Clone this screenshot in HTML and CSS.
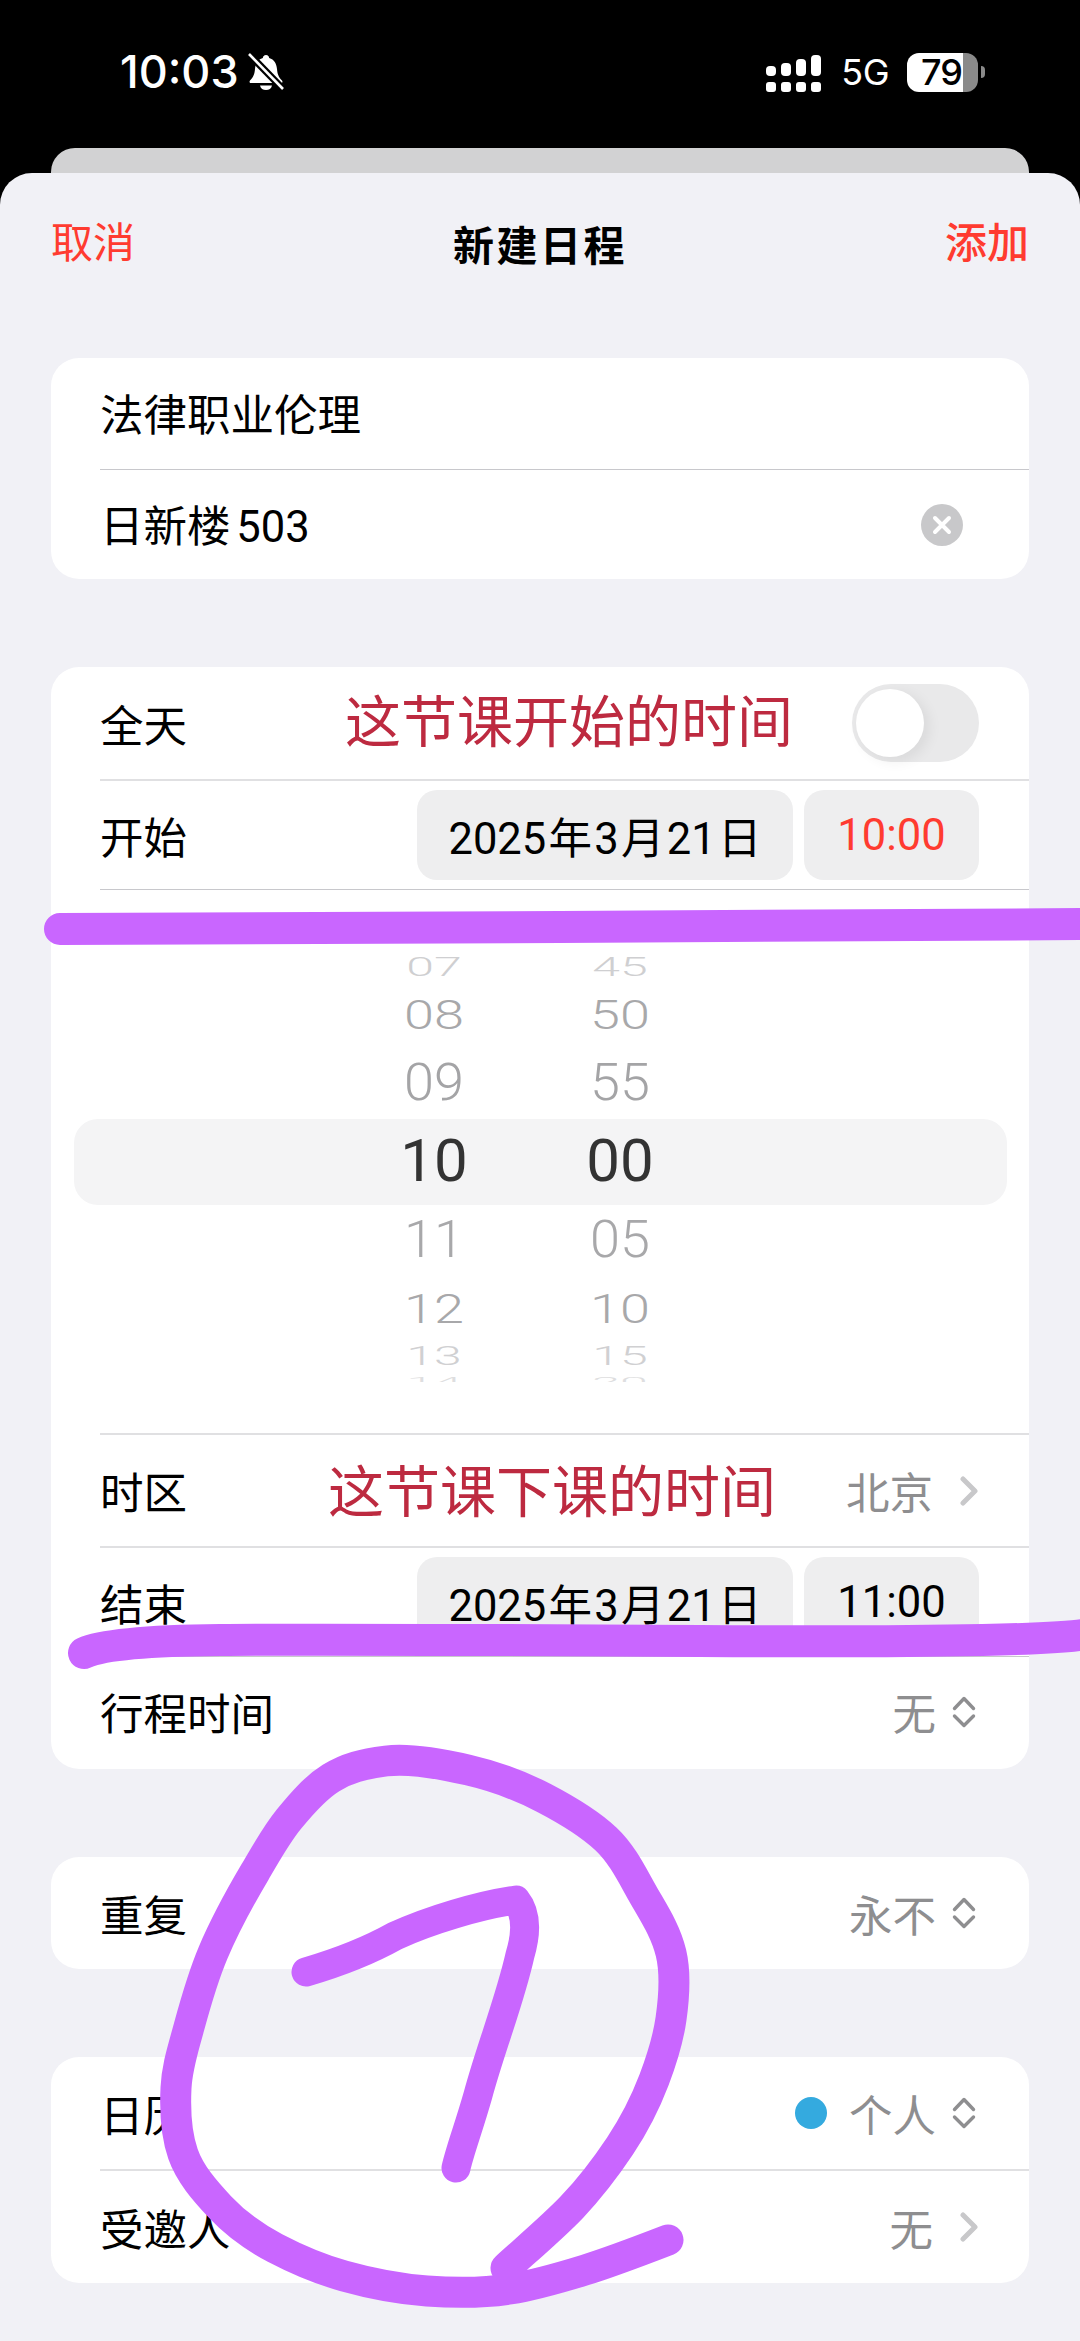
FILE: index.html
```html
<!DOCTYPE html>
<html lang="zh">
<head>
<meta charset="utf-8">
<title>新建日程</title>
<link rel="stylesheet" href="styles.css">
</head>
<body>
<div class="screen">
  <header class="status">
    <div class="status-left">
      <span class="clock">10:03</span>
      <svg class="bell" viewBox="0 0 36 38"><path d="M18 2c2 0 3 1.400 3.200 3 5 1.500 7.300 5.500 7.800 11 .4 5 1.600 8 5 11.500 1 1.300.3 2.500-1 2.500H3c-1.300 0-2-1.200-1-2.500 3.400-3.500 4.600-6.500 5-11.500.5-5.500 2.800-9.500 7.800-11C15 3.400 16 2 18 2z" fill="#fff"/><path d="M12 32.500h12c-.5 3-3 4.500-6 4.500s-5.500-1.500-6-4.500z" fill="#fff"/><path d="M1 1l34 35" stroke="#000" stroke-width="7"/><path d="M1 1l34 35" stroke="#fff" stroke-width="2.600"/></svg>
    </div>
    <div class="status-right">
      <div class="signal">
        <i class="bar b1"></i><i class="bar b2"></i><i class="bar b3"></i><i class="bar b4"></i>
      </div>
      <span class="net">5G</span>
      <div class="battery"><span class="level">79</span></div>
      <i class="battery-cap"></i>
    </div>
  </header>
  <div class="back-card"></div>
  <main class="sheet">
    <nav class="nav">
      <span class="nav-action">取消</span>
      <span class="nav-title">新建日程</span>
      <span class="nav-action nav-strong">添加</span>
    </nav>

    <section class="card card-info">
      <div class="row row-title"><span>法律职业伦理</span></div>
      <div class="row row-location"><span class="tight">日新楼 503</span>
        <svg class="clear" viewBox="0 0 42 42"><circle cx="21" cy="21" r="21" fill="#c8c8ca"/><path d="M14 14l14 14M28 14L14 28" stroke="#fff" stroke-width="4" stroke-linecap="round"/></svg>
      </div>
    </section>

    <section class="card card-time">
      <div class="row row-allday"><span>全天</span><span class="toggle"><i class="thumb"></i></span></div>
      <div class="row row-start"><span>开始</span>
        <span class="pills"><span class="pill pill-date">2025 年 3 月 21 日</span><span class="pill pill-time is-active">10:00</span></span>
      </div>
      <div class="picker">
        <div class="picker-band"></div>
        <div class="wheel">
          <span class="tick t1">07</span><span class="tick t2">08</span><span class="tick t3">09</span><span class="tick t4">10</span><span class="tick t5">11</span><span class="tick t6">12</span><span class="tick t7">13</span><span class="tick t8">14</span>
        </div>
        <div class="wheel">
          <span class="tick t1">45</span><span class="tick t2">50</span><span class="tick t3">55</span><span class="tick t4">00</span><span class="tick t5">05</span><span class="tick t6">10</span><span class="tick t7">15</span><span class="tick t8">20</span>
        </div>
      </div>
      <div class="row row-zone"><span>时区</span><span class="value has-chev">北京<svg class="chev" viewBox="0 0 18 30"><path d="M3 3l12 12L3 27" fill="none" stroke="#c8c8ca" stroke-width="5" stroke-linecap="round" stroke-linejoin="round"/></svg></span></div>
      <div class="row row-end"><span>结束</span>
        <span class="pills"><span class="pill pill-date">2025 年 3 月 21 日</span><span class="pill pill-time">11:00</span></span>
      </div>
      <div class="row row-travel"><span>行程时间</span><span class="value">无<svg class="updown" viewBox="0 0 24 32"><path d="M2.500 12.500L12 2.500l9.500 10M2.500 20L12 29.500 21.500 20" fill="none" stroke="#8e8e90" stroke-width="3.400" stroke-linecap="round" stroke-linejoin="round"/></svg></span></div>
    </section>

    <section class="card card-repeat">
      <div class="row row-repeat"><span>重复</span><span class="value">永不<svg class="updown" viewBox="0 0 24 32"><path d="M2.500 12.500L12 2.500l9.500 10M2.500 20L12 29.500 21.500 20" fill="none" stroke="#8e8e90" stroke-width="3.400" stroke-linecap="round" stroke-linejoin="round"/></svg></span></div>
    </section>

    <section class="card card-calendar">
      <div class="row row-cal"><span>日历</span><span class="value"><i class="dot"></i>个人<svg class="updown" viewBox="0 0 24 32"><path d="M2.500 12.500L12 2.500l9.500 10M2.500 20L12 29.500 21.500 20" fill="none" stroke="#8e8e90" stroke-width="3.400" stroke-linecap="round" stroke-linejoin="round"/></svg></span></div>
      <div class="row row-invite"><span>受邀人</span><span class="value has-chev">无<svg class="chev" viewBox="0 0 18 30"><path d="M3 3l12 12L3 27" fill="none" stroke="#c8c8ca" stroke-width="5" stroke-linecap="round" stroke-linejoin="round"/></svg></span></div>
    </section>
  </main>

  <span class="note note-start">这节课开始的时间</span>
  <span class="note note-end">这节课下课的时间</span>
  <svg class="ink" viewBox="0 0 1080 2341">
    <path class="stroke-line" d="M60 929 Q300 928 560 927 T1090 924"/>
    <path class="stroke-line" d="M84 1653 Q110 1641 220 1640 T700 1641 T1090 1633"/>
    <path class="stroke-pen" d="M668 2240 C668 2240 611 2262 585 2270 S536 2285 510 2289 S455 2293 427 2291 S369 2283 344 2276 S296 2259 275 2248 S235 2223 220 2207 S190 2174 183 2154 S175 2109 176 2088 S183 2049 189 2027 S202 1979 213 1953 S242 1894 255 1872 S276 1835 289 1819 S315 1788 331 1778 S363 1764 386 1761 S442 1764 468 1770 S521 1786 544 1798 S589 1823 606 1839 S633 1877 644 1896 S666 1932 671 1953 S674 1998 671 2019 S662 2059 654 2080 S634 2125 620 2146 S591 2187 572 2207 S520 2255 506 2268"/>
    <path class="stroke-seven" d="M306 1972 C340 1962 370 1950 395 1936 C430 1920 480 1905 516 1900 C528 1915 526 1935 520 1955 C510 2000 490 2050 478 2095 C468 2130 460 2150 456 2168"/>
  </svg>
</div>
</body>
</html>
```

FILE: styles.css
```css
* { box-sizing: border-box; }
html, body { margin: 0; padding: 0; background: #000; }
body { font-family: "Roboto", "Noto Sans CJK SC", sans-serif; }
.screen { position: relative; width: 1080px; height: 2341px; overflow: hidden; background: #000; }

/* status bar */
.status { height: 148px; padding: 52px 95px 0 120px; display: flex; justify-content: space-between; align-items: flex-start; color: #fff; }
.status-left { display: flex; align-items: center; gap: 9px; height: 40px; }
.clock { font-family: "Inter", sans-serif; font-size: 45px; font-weight: 500; line-height: 40px; }
.bell { width: 36px; height: 38px; }
.status-right { display: flex; align-items: center; height: 40px; }
.signal { display: flex; gap: 5px; align-items: flex-end; height: 37px; margin-right: 20px; margin-top: 2px; }
.bar { position: relative; display: block; width: 10px; border-radius: 4px; background: #fff; margin-bottom: 16px; }
.bar::after { content: ""; position: absolute; left: 0; top: calc(100% + 6px); width: 10px; height: 10px; border-radius: 3px; background: #fff; }
.b1 { height: 10px; }
.b2 { height: 13px; }
.b3 { height: 17px; }
.b4 { height: 21px; }
.net { font-family: "Inter", sans-serif; font-size: 36px; line-height: 40px; margin-right: 18px; letter-spacing: -0.5px; }
.battery { width: 71px; height: 39px; border-radius: 12px; background: linear-gradient(to right, #fff 56px, #8a8a8a 56px); display: flex; align-items: center; padding-left: 14px; }
.level { font-family: "Inter", sans-serif; color: #000; font-size: 36px; font-weight: 500; line-height: 39px; letter-spacing: -1px; }
.battery-cap { display: block; width: 4px; height: 12px; margin-left: 3px; background: #8a8a8a; border-radius: 0 4px 4px 0; }

.back-card { height: 60px; margin: 0 51px; background: #d2d2d3; border-radius: 24px 24px 0 0; }

/* sheet */
.sheet { position: absolute; left: 0; top: 173px; width: 1080px; height: 2168px; background: #f1f1f6; border-radius: 32px 32px 0 0; padding: 0 51px; display: flex; flex-direction: column; }
.nav { height: 140px; display: flex; align-items: center; justify-content: space-between; flex: none; margin-bottom: 45px; }
.nav-action { color: #ff3b30; font-size: 42px; line-height: 60px; padding-top: 2px; }
.nav-strong { font-weight: 500; }
.nav-title { font-size: 41px; font-weight: 700; letter-spacing: 2.500px; color: #000; }

.card { background: #fff; border-radius: 28px; flex: none; }
.card-info { height: 221px; margin-bottom: 88px; }
.card-time { height: 1102px; margin-bottom: 88px; }
.card-repeat { height: 112px; margin-bottom: 88px; }
.card-calendar { height: 226px; }

.row { display: flex; align-items: center; justify-content: space-between; margin-left: 49px; padding-right: 53px; font-size: 43.500px; color: #000; height: 111px; }
.row + .row { border-top: 2px solid #e0e0e2; }
.card-info .row + .row { border-top: 1px solid #c8c8cc; }
.row-title { height: 111px; padding-bottom: 2px; }
.row-location { height: 110px; padding-right: 66px; padding-bottom: 2px; }
.tight { word-spacing: -5px; }
.clear { width: 42px; height: 42px; margin-top: 2px; }
.row-allday { height: 112px; padding-right: 50px; }
.row-start { height: 111px; padding-right: 50px; border-bottom: 1px solid #c8c8cc; }
.row-zone { height: 113px; border-top: 2px solid #e0e0e2; }
.row-end { height: 110px; padding-right: 50px; }
.row-travel { height: 113px; padding-bottom: 3px; }
.row-repeat { height: 112px; }
.row-cal { height: 112px; }
.row-invite { height: 114px; }
.row-end + .row { border-top: 1px solid #c8c8cc; }

.toggle { position: relative; display: block; width: 127px; height: 78px; border-radius: 39px; background: #e9e9ea; }
.thumb { position: absolute; left: 4px; top: 5px; width: 68px; height: 68px; border-radius: 50%; background: #fff; box-shadow: 5px 4px 14px rgba(0,0,0,.07); }

.pills { display: flex; gap: 11px; }
.pill { display: flex; align-items: center; justify-content: center; height: 90px; background: #eeeeef; border-radius: 20px; font-size: 43.500px; white-space: nowrap; }
.pill-date { width: 376px; word-spacing: -8.500px; }
.pill-time { width: 175px; }
.is-active { color: #ff3b30; }

.value { display: flex; align-items: center; color: #8e8e90; font-size: 43.500px; }
.has-chev { margin-right: -2px; }
.updown { width: 24px; height: 32px; margin-left: 16px; }
.chev { width: 18px; height: 30px; margin-left: 27px; }
.dot { width: 32px; height: 32px; border-radius: 50%; background: #34aadf; margin-right: 22px; }

/* picker */
.picker { position: relative; height: 543px; display: flex; padding-left: 323px; gap: 66px; overflow: hidden; }
.picker-band { position: absolute; left: 23px; right: 22px; top: 229px; height: 86px; border-radius: 24px; background: #f4f4f5; }
.wheel { position: relative; display: flex; flex-direction: column; width: 120px; align-items: center; padding-top: 53px; }
.tick { display: block; flex: none; font-weight: 300; font-size: 54px; color: #a8a8aa; transform-origin: center; }
.t1 { height: 48px; line-height: 48px; font-size: 50px; transform: scaleY(.5); color: #cfcfd1; }
.t2 { height: 48px; line-height: 48px; transform: scaleY(.76); }
.t3 { height: 88px; line-height: 88px; transform: scaleY(.95); color: #a4a4a6; }
.t4 { height: 68px; line-height: 68px; font-size: 60px; font-weight: 400; color: #333; }
.t5 { height: 90px; line-height: 90px; transform: scaleY(.95); }
.t6 { height: 48px; line-height: 48px; transform: scaleY(.76); }
.t7 { height: 44px; line-height: 48px; font-size: 50px; transform: scaleY(.5); color: #d0d0d2; }
.t8 { height: 20px; line-height: 40px; font-size: 50px; overflow: hidden; color: #dedee0; transform-origin: top; transform: scaleY(.25); }

/* annotations */
.note { position: absolute; color: #bd2a40; font-size: 56px; line-height: 70px; white-space: nowrap; }
.note-start { left: 345px; top: 688px; }
.note-end { left: 328px; top: 1458px; }
.ink { position: absolute; left: 0; top: 0; width: 1080px; height: 2341px; pointer-events: none; }
.stroke-line { fill: none; stroke: #c966ff; stroke-width: 32px; stroke-linecap: round; }
.stroke-pen { fill: none; stroke: #c966ff; stroke-width: 31px; stroke-linecap: round; stroke-linejoin: round; }
.stroke-seven { fill: none; stroke: #c966ff; stroke-width: 29px; stroke-linecap: round; stroke-linejoin: round; }
```
